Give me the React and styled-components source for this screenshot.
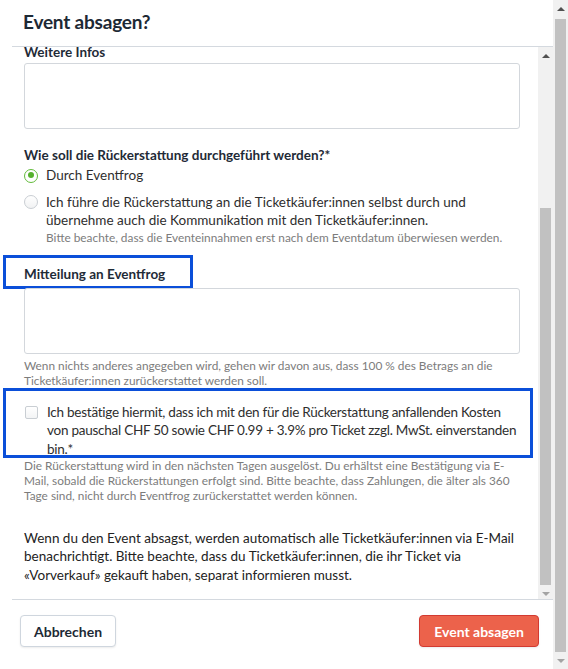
import { styled, createGlobalStyle } from 'styled-components';

const GlobalStyle = createGlobalStyle`
    html, body {
        margin: 0;
        padding: 0;
        background: #fff;
    }
    body {
        font-family: Lato, "Noto Sans", sans-serif;
        color: #2e2e2e;
    }
    * {
        box-sizing: border-box;
    }
`;

function Scrollbar({ thumbTop, thumbHeight, upActive, downActive }) {
    return (
        <StyledScrollbar>
            <StyledArrow $active={upActive} />
            <StyledTrack>
                <StyledThumb style={{ marginTop: thumbTop, height: thumbHeight }} />
            </StyledTrack>
            <StyledArrow $down $active={downActive} />
        </StyledScrollbar>
    );
}

function App() {
    return (
        <>
            <GlobalStyle />
            <StyledPage>
                <StyledModal>
                    <StyledHeader>
                        <StyledTitle>Event absagen?</StyledTitle>
                    </StyledHeader>
                    <StyledBodyRow>
                        <StyledContent>
                            <StyledLabel $top="-5px" $bottom="1px">Weitere Infos</StyledLabel>
                            <StyledTextarea />

                            <StyledLabel $top="16px" $bottom="1px">
                                Wie soll die Rückerstattung durchgeführt werden?*
                            </StyledLabel>
                            <StyledOption>
                                <StyledRadio $checked />
                                <span>Durch Eventfrog</span>
                            </StyledOption>
                            <StyledOption $top="8px">
                                <StyledRadio />
                                <div>
                                    Ich führe die Rückerstattung an die Ticketkäufer:innen
                                    selbst durch und übernehme auch die Kommunikation mit
                                    den Ticketkäufer:innen.
                                    <StyledHint>
                                        Bitte beachte, dass die Eventeinnahmen erst nach dem
                                        Eventdatum überwiesen werden.
                                    </StyledHint>
                                </div>
                            </StyledOption>

                            <StyledMarked $width="190px" $height="34px" $top="10px" $pad="6px">
                                <StyledLabel>Mitteilung an Eventfrog</StyledLabel>
                            </StyledMarked>
                            <StyledTextarea $top="-1px" />
                            <StyledHint $top="4px">
                                Wenn nichts anderes angegeben wird, gehen wir davon aus, dass
                                100 % des Betrags an die Ticketkäufer:innen zurückerstattet
                                werden soll.
                            </StyledHint>

                            <StyledMarked $width="530px" $height="70px" $pad="12px">
                                <StyledOption>
                                    <StyledCheckbox />
                                    <StyledTight>
                                        Ich bestätige hiermit, dass ich mit den für die
                                        Rückerstattung anfallenden Kosten von pauschal CHF 50
                                        sowie CHF 0.99 + 3.9% pro Ticket zzgl. MwSt.
                                        einverstanden bin.*
                                    </StyledTight>
                                </StyledOption>
                            </StyledMarked>
                            <StyledHint>
                                Die Rückerstattung wird in den nächsten Tagen ausgelöst. Du
                                erhältst eine Bestätigung via E-Mail, sobald die
                                Rückerstattungen erfolgt sind. Bitte beachte, dass Zahlungen,
                                die älter als 360 Tage sind, nicht durch Eventfrog
                                zurückerstattet werden können.
                            </StyledHint>

                            <StyledText>
                                Wenn du den Event absagst, werden automatisch alle
                                Ticketkäufer:innen via E-Mail benachrichtigt. Bitte beachte,
                                dass du Ticketkäufer:innen, die ihr Ticket via «Vorverkauf»
                                gekauft haben, separat informieren musst.
                            </StyledText>
                        </StyledContent>
                        <Scrollbar thumbTop={144} thumbHeight={377} upActive />
                    </StyledBodyRow>
                    <StyledFooter>
                        <StyledButton>Abbrechen</StyledButton>
                        <StyledButton $danger>Event absagen</StyledButton>
                    </StyledFooter>
                </StyledModal>
                <Scrollbar thumbTop={2} thumbHeight={633} upActive />
            </StyledPage>
        </>
    );
}

export default App;

const StyledPage = styled.div`
    display: flex;
    height: 669px;
    overflow: hidden;
`;

const StyledModal = styled.div`
    flex: 1;
    display: flex;
    flex-direction: column;
    min-width: 0;
    background: #fff;
`;

const StyledHeader = styled.div`
    display: flex;
    align-items: center;
    height: 47px;
    flex: none;
    margin-left: 12px;
    padding: 0 11px 4px;
    border-bottom: 1px solid #d4d9df;
`;

const StyledTitle = styled.h2`
    margin: 0;
    font-size: 19px;
    font-weight: 700;
    letter-spacing: -0.2px;
    color: #1d2935;
`;

const StyledBodyRow = styled.div`
    display: flex;
    height: 552px;
    flex: none;
`;

const StyledContent = styled.div`
    flex: 1;
    min-width: 0;
    overflow: hidden;
    padding: 0 18px 0 24px;
    font-size: 13.5px;
    line-height: 18.5px;
`;

const StyledLabel = styled.div`
    margin-top: ${(p) => p.$top || '0'};
    margin-bottom: ${(p) => p.$bottom || '2px'};
    font-weight: 700;
    line-height: 20px;
    color: #1f2b37;
`;

const StyledTextarea = styled.div`
    height: 66px;
    margin-top: ${(p) => p.$top || '0'};
    border: 1px solid #d3d7dc;
    border-radius: 3px;
    background: #fff;
`;

const StyledOption = styled.label`
    display: flex;
    align-items: flex-start;
    gap: 8px;
    margin-top: ${(p) => p.$top || '0'};
`;

const StyledTight = styled.span`
    letter-spacing: -0.25px;
`;

const StyledRadio = styled.span`
    flex: none;
    position: relative;
    width: 14px;
    height: 14px;
    margin-top: 2.5px;
    border-radius: 50%;
    border: ${(p) => (p.$checked ? '1.5px solid #63bb3b' : '1px solid #c9ced3')};
    background: ${(p) => (p.$checked ? '#fff' : 'linear-gradient(#fff, #f1f2f3)')};

    &::after {
        content: '';
        display: ${(p) => (p.$checked ? 'block' : 'none')};
        position: absolute;
        left: 2.5px;
        top: 2.5px;
        width: 6px;
        height: 6px;
        border-radius: 50%;
        background: #55b12c;
    }
`;

const StyledCheckbox = styled.span`
    flex: none;
    width: 13px;
    height: 13px;
    margin: 3px 1px 0 1px;
    border: 1px solid #c9ced3;
    border-radius: 2px;
    background: linear-gradient(#fff, #f3f4f5);
`;

const StyledHint = styled.div`
    margin-top: ${(p) => p.$top || '0'};
    font-size: 11.85px;
    line-height: 15px;
    color: #7c7c7c;
`;

const StyledMarked = styled.div`
    width: ${(p) => p.$width};
    height: ${(p) => p.$height};
    margin: ${(p) => p.$top || '0'} 0 0 -21px;
    padding: ${(p) => p.$pad} 10px 0 18px;
    border: 3px solid #0b4fd9;
`;

const StyledText = styled.p`
    margin: 26px 0 0;
    color: #222;
`;

const StyledFooter = styled.div`
    flex: 1;
    display: flex;
    justify-content: space-between;
    align-items: flex-start;
    margin-left: 12px;
    padding: 15px 14px 0 8px;
    border-top: 1px solid #d4d9df;
`;

const StyledButton = styled.button`
    height: 32px;
    padding: 0 ${(p) => (p.$danger ? '14px' : '13px')};
    font-family: inherit;
    font-size: 14px;
    font-weight: 700;
    border-radius: 4px;
    border: 1px solid ${(p) => (p.$danger ? '#d23a31' : '#cfd6de')};
    background: ${(p) => (p.$danger ? '#ec624b' : '#fff')};
    color: ${(p) => (p.$danger ? '#fff' : '#1d2935')};
    box-shadow: 0 1px 2px rgba(0, 0, 0, 0.08);
`;

const StyledScrollbar = styled.div`
    flex: none;
    display: flex;
    flex-direction: column;
    width: 15px;
    background: #f1f1f1;
`;

const StyledArrow = styled.div`
    flex: none;
    display: flex;
    align-items: center;
    justify-content: center;
    height: 17px;

    &::before {
        content: '';
        width: 0;
        height: 0;
        border-left: 4px solid transparent;
        border-right: 4px solid transparent;
        ${(p) => (p.$down ? 'border-top' : 'border-bottom')}: 4px solid
            ${(p) => (p.$active ? '#505050' : '#a3a3a3')};
    }
`;

const StyledTrack = styled.div`
    flex: 1;
    padding: 0 2px;
`;

const StyledThumb = styled.div`
    background: #c1c1c1;
`;
